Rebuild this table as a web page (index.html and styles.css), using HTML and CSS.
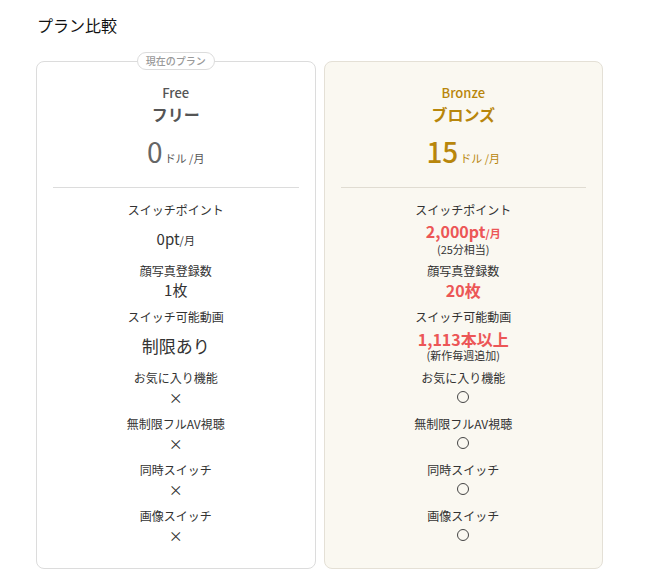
FILE: index.html
```html
<!DOCTYPE html>
<html lang="ja">
<head>
<meta charset="utf-8">
<link rel="stylesheet" href="styles.css">
</head>
<body>
<main class="page">
  <h1 class="title">プラン比較</h1>
  <div class="plans">
    <section class="card">
      <span class="badge">現在のプラン</span>
      <div class="head">
        <div class="name-en">Free</div>
        <div class="name-ja">フリー</div>
        <div class="price"><span class="amount">0</span><span class="unit">ドル /月</span></div>
      </div>
      <hr class="divider">
      <div class="feature tall">
        <div class="label">スイッチポイント</div>
        <div class="value"><div class="v-main">0pt<span class="small">/月</span></div></div>
      </div>
      <div class="feature">
        <div class="label">顔写真登録数</div>
        <div class="value"><div class="v-main">1枚</div></div>
      </div>
      <div class="feature tall">
        <div class="label">スイッチ可能動画</div>
        <div class="value"><div class="v-main big">制限あり</div></div>
      </div>
      <div class="feature">
        <div class="label">お気に入り機能</div>
        <div class="value"><span class="cross">×</span></div>
      </div>
      <div class="feature">
        <div class="label">無制限フルAV視聴</div>
        <div class="value"><span class="cross">×</span></div>
      </div>
      <div class="feature">
        <div class="label">同時スイッチ</div>
        <div class="value"><span class="cross">×</span></div>
      </div>
      <div class="feature">
        <div class="label">画像スイッチ</div>
        <div class="value"><span class="cross">×</span></div>
      </div>
    </section>
    <section class="card bronze">
      <div class="head">
        <div class="name-en">Bronze</div>
        <div class="name-ja">ブロンズ</div>
        <div class="price"><span class="amount">15</span><span class="unit">ドル /月</span></div>
      </div>
      <hr class="divider">
      <div class="feature tall">
        <div class="label">スイッチポイント</div>
        <div class="value">
          <div class="v-main hl">2,000pt<span class="small">/月</span></div>
          <div class="note">(25分相当)</div>
        </div>
      </div>
      <div class="feature">
        <div class="label">顔写真登録数</div>
        <div class="value"><div class="v-main hl">20枚</div></div>
      </div>
      <div class="feature tall">
        <div class="label">スイッチ可能動画</div>
        <div class="value">
          <div class="v-main hl">1,113本以上</div>
          <div class="note">(新作毎週追加)</div>
        </div>
      </div>
      <div class="feature">
        <div class="label">お気に入り機能</div>
        <div class="value"><span class="circle"></span></div>
      </div>
      <div class="feature">
        <div class="label">無制限フルAV視聴</div>
        <div class="value"><span class="circle"></span></div>
      </div>
      <div class="feature">
        <div class="label">同時スイッチ</div>
        <div class="value"><span class="circle"></span></div>
      </div>
      <div class="feature">
        <div class="label">画像スイッチ</div>
        <div class="value"><span class="circle"></span></div>
      </div>
    </section>
  </div>
</main>
</body>
</html>
```
FILE: styles.css
```css
* { box-sizing: border-box; }
html, body { margin: 0; padding: 0; background: #fff; }
body {
  font-family: "Noto Sans CJK JP", "Noto Sans", sans-serif;
  color: #333;
}
.page {
  padding: 13px 36px 12px;
  width: 648px;
}
.title {
  margin: 0 0 0 1px;
  font-size: 16px;
  line-height: 24px;
  font-weight: 400;
  color: #111;
}
.plans {
  margin-top: 24px;
  width: 567px;
  display: grid;
  grid-template-columns: 1fr 1fr;
  gap: 8px;
}
.card {
  position: relative;
  border: 1px solid #dcdcdc;
  border-radius: 8px;
  padding: 22px 16px 16px;
  text-align: center;
  background: #fff;
  height: 508px;
}
.card.bronze {
  background: #faf8f1;
  border-color: #e4e0d6;
}
.badge {
  position: absolute;
  top: -10px;
  left: 50%;
  transform: translateX(-50%);
  background: #fff;
  border: 1px solid #dcdcdc;
  border-radius: 10px;
  padding: 0 8px;
  font-size: 10px;
  line-height: 16px;
  font-weight: 500;
  color: #999;
  white-space: nowrap;
}
.head { color: #555; }
.bronze .head { color: #b8860b; }
.name-en {
  font-size: 13px;
  line-height: 18px;
  font-weight: 500;
}
.name-ja {
  font-size: 16px;
  line-height: 22px;
  font-weight: 700;
  margin-top: 1px;
}
.price {
  margin-top: 8px;
  line-height: 36px;
}
.amount {
  font-size: 28px;
  font-weight: 400;
}
.head .amount { color: #666; }
.bronze .head .amount { color: #b8860b; font-weight: 500; }
.unit {
  font-size: 11px;
  margin-left: 2px;
}
.divider {
  border: 0;
  border-top: 1px solid #dcdcdc;
  margin: 11px 0 13px;
}
.bronze .divider { border-top-color: #e0dcd2; }
.feature {
  display: flex;
  flex-direction: column;
  margin-bottom: 8px;
}
.feature.tall { margin-bottom: 3px; }
.label {
  font-size: 12px;
  line-height: 18px;
  color: #333;
}
.value {
  min-height: 20px;
  display: flex;
  flex-direction: column;
  align-items: center;
  justify-content: center;
}
.feature.tall .value { min-height: 40px; }
.v-main {
  font-size: 15px;
  line-height: 20px;
  color: #333;
}
.v-main.big { font-size: 17px; }
.v-main.hl {
  color: #ec5656;
  font-weight: 700;
  font-size: 16px;
  line-height: 19px;
}
.small {
  font-size: 11px;
}
.note {
  font-size: 11px;
  line-height: 13px;
  color: #333;
}
.cross {
  font-size: 14px;
  line-height: 20px;
  color: #333;
}
.circle {
  display: block;
  width: 12px;
  height: 12px;
  border: 1.5px solid #444;
  border-radius: 50%;
}
```
